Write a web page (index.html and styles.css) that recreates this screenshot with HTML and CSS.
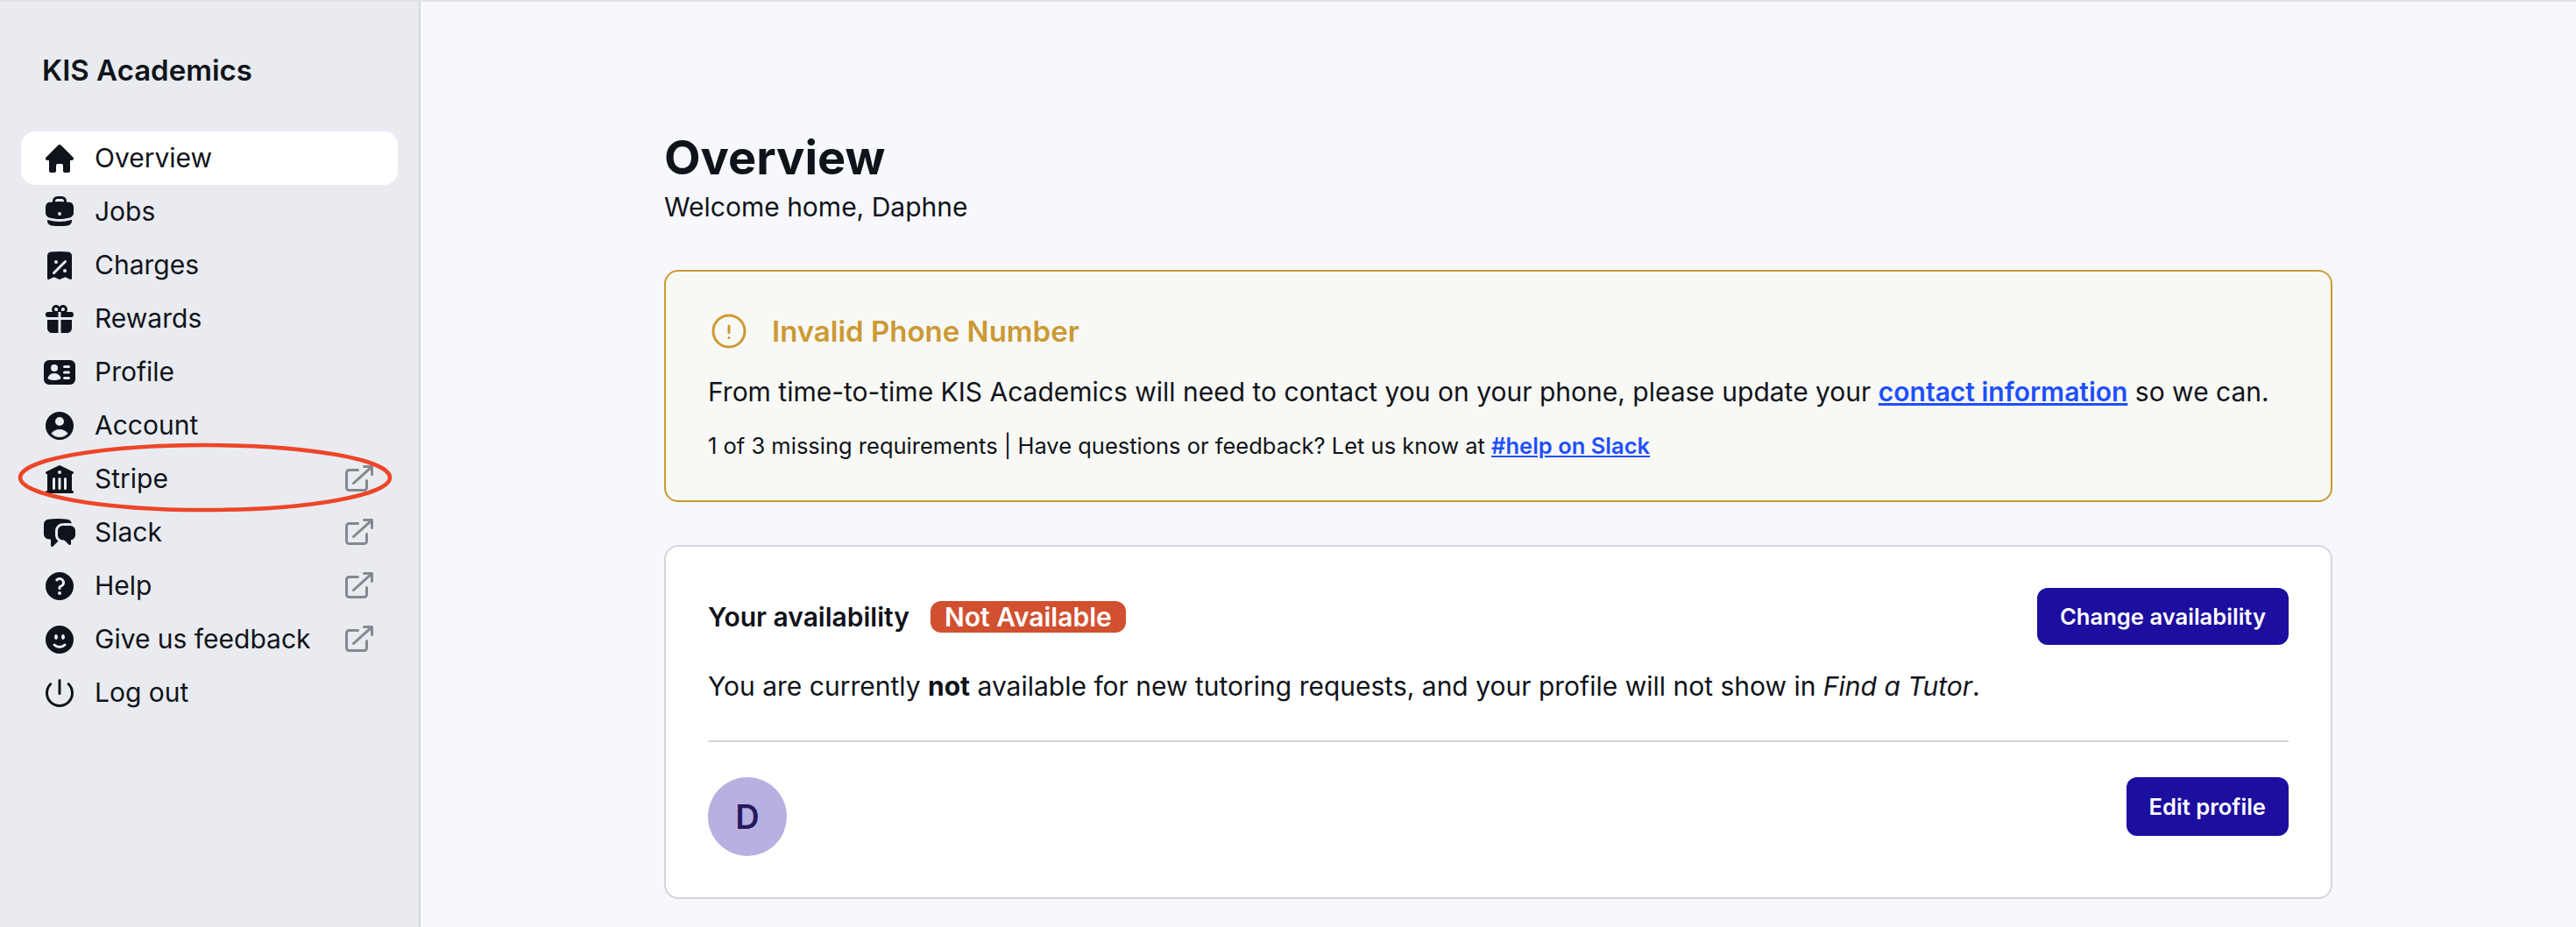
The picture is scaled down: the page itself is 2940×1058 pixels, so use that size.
FILE: index.html
```html
<!DOCTYPE html>
<html lang="en">
<head>
    <meta charset="UTF-8">
    <title>Overview - KIS Academics</title>
    <link rel="stylesheet" href="styles.css">
</head>
<body>
    <div class="layout">
        <aside class="sidebar">
            <div class="brand">KIS Academics</div>
            <nav class="nav">
                <a class="nav-item active">
                    <svg class="icon" viewBox="0 0 20 20"><path fill-rule="evenodd" clip-rule="evenodd" d="M9.293 2.293a1 1 0 0 1 1.414 0l7 7A1 1 0 0 1 17 11h-1v6a1 1 0 0 1-1 1h-2a1 1 0 0 1-1-1v-3a1 1 0 0 0-1-1H9a1 1 0 0 0-1 1v3a1 1 0 0 1-1 1H5a1 1 0 0 1-1-1v-6H3a1 1 0 0 1-.707-1.707l7-7Z"/></svg>
                    <span class="nav-label">Overview</span>
                </a>
                <a class="nav-item">
                    <svg class="icon" viewBox="0 0 20 20"><path fill-rule="evenodd" clip-rule="evenodd" d="M6 3.75A2.75 2.75 0 0 1 8.75 1h2.5A2.75 2.75 0 0 1 14 3.75v.443c.572.055 1.14.122 1.706.2C17.053 4.582 18 5.75 18 7.07v3.469c0 1.126-.694 2.191-1.83 2.54-1.952.599-4.024.921-6.17.921s-4.219-.322-6.17-.921C2.694 12.73 2 11.665 2 10.539V7.07c0-1.321.947-2.489 2.294-2.676A41.047 41.047 0 0 1 6 4.193V3.75Zm6.5 0v.325a41.622 41.622 0 0 0-5 0V3.75c0-.69.56-1.25 1.25-1.25h2.5c.69 0 1.25.56 1.25 1.25ZM10 10a1 1 0 0 0-1 1v.01a1 1 0 0 0 1 1h.01a1 1 0 0 0 1-1V11a1 1 0 0 0-1-1H10Z"/><path d="M3 15.055v-.684c.126.053.255.1.39.142 2.092.642 4.313.987 6.61.987 2.297 0 4.518-.345 6.61-.987.135-.041.264-.089.39-.142v.684c0 1.347-.985 2.53-2.363 2.686a41.454 41.454 0 0 1-9.274 0C3.985 17.585 3 16.402 3 15.055Z"/></svg>
                    <span class="nav-label">Jobs</span>
                </a>
                <a class="nav-item">
                    <svg class="icon" viewBox="0 0 20 20"><path fill-rule="evenodd" clip-rule="evenodd" d="M4.93 2.31a41.401 41.401 0 0 1 10.14 0C16.194 2.45 17 3.414 17 4.517V17.25a.75.75 0 0 1-1.075.676l-2.8-1.344-2.8 1.344a.75.75 0 0 1-.65 0l-2.8-1.344-2.8 1.344A.75.75 0 0 1 3 17.25V4.517c0-1.103.806-2.068 1.93-2.207Zm8.85 5.97a.75.75 0 0 0-1.06-1.06l-6.5 6.5a.75.75 0 1 0 1.06 1.06l6.5-6.5ZM9 8a1 1 0 1 1-2 0 1 1 0 0 1 2 0Zm3 5a1 1 0 1 1 2 0 1 1 0 0 1-2 0Z"/></svg>
                    <span class="nav-label">Charges</span>
                </a>
                <a class="nav-item">
                    <svg class="icon" viewBox="0 0 20 20"><path fill-rule="evenodd" clip-rule="evenodd" d="M14 6a2.5 2.5 0 0 0-4-3 2.5 2.5 0 0 0-4 3H3.25C2.56 6 2 6.56 2 7.25v.5C2 8.44 2.56 9 3.25 9h6V6h1.5v3h6C17.44 9 18 8.44 18 7.75v-.5C18 6.56 17.44 6 16.75 6H14Zm-1-1.5a1 1 0 0 1-1 1h-1v-1a1 1 0 1 1 2 0Zm-6 0a1 1 0 0 0 1 1h1v-1a1 1 0 0 0-2 0Z"/><path d="M9.25 10.5H3v4.75A2.75 2.75 0 0 0 5.75 18h3.5v-7.5ZM10.75 18v-7.5H17v4.75A2.75 2.75 0 0 1 14.25 18h-3.5Z"/></svg>
                    <span class="nav-label">Rewards</span>
                </a>
                <a class="nav-item">
                    <svg class="icon" viewBox="0 0 20 20"><path fill-rule="evenodd" clip-rule="evenodd" d="M1 6a3 3 0 0 1 3-3h12a3 3 0 0 1 3 3v8a3 3 0 0 1-3 3H4a3 3 0 0 1-3-3V6Zm4 1.5a2 2 0 1 1 4 0 2 2 0 0 1-4 0Zm2 3a4 4 0 0 0-3.665 2.395.75.75 0 0 0 .416 1A8.98 8.98 0 0 0 7 14.5a8.98 8.98 0 0 0 3.249-.604.75.75 0 0 0 .416-1.001A4.001 4.001 0 0 0 7 10.5Zm5-3.75a.75.75 0 0 1 .75-.75h2.5a.75.75 0 0 1 0 1.5h-2.5a.75.75 0 0 1-.75-.75Zm0 6.5a.75.75 0 0 1 .75-.75h2.5a.75.75 0 0 1 0 1.5h-2.5a.75.75 0 0 1-.75-.75Zm.75-4a.75.75 0 0 0 0 1.5h2.5a.75.75 0 0 0 0-1.5h-2.5Z"/></svg>
                    <span class="nav-label">Profile</span>
                </a>
                <a class="nav-item">
                    <svg class="icon" viewBox="0 0 20 20"><path fill-rule="evenodd" clip-rule="evenodd" d="M18 10a8 8 0 1 1-16 0 8 8 0 0 1 16 0Zm-5.5-2.5a2.5 2.5 0 1 1-5 0 2.5 2.5 0 0 1 5 0ZM10 12a5.99 5.99 0 0 0-4.793 2.39A6.483 6.483 0 0 0 10 16.5a6.483 6.483 0 0 0 4.793-2.11A5.99 5.99 0 0 0 10 12Z"/></svg>
                    <span class="nav-label">Account</span>
                </a>
                <a class="nav-item">
                    <svg class="icon" viewBox="0 0 20 20"><path fill-rule="evenodd" clip-rule="evenodd" d="M9.674 2.075a.75.75 0 0 1 .652 0l7.25 3.5A.75.75 0 0 1 17 6.957V16.5h.25a.75.75 0 0 1 0 1.5H2.75a.75.75 0 0 1 0-1.5H3V6.957a.75.75 0 0 1-.576-1.382l7.25-3.5ZM11 6a1 1 0 1 1-2 0 1 1 0 0 1 2 0ZM7.5 9.75a.75.75 0 0 0-1.5 0v5.5a.75.75 0 0 0 1.5 0v-5.5Zm3.25 0a.75.75 0 0 0-1.5 0v5.5a.75.75 0 0 0 1.5 0v-5.5Zm3.25 0a.75.75 0 0 0-1.5 0v5.5a.75.75 0 0 0 1.5 0v-5.5Z"/></svg>
                    <span class="nav-label">Stripe</span>
                    <svg class="icon external" viewBox="0 0 20 20"><path fill-rule="evenodd" clip-rule="evenodd" d="M4.25 5.5a.75.75 0 0 0-.75.75v8.5c0 .414.336.75.75.75h8.5a.75.75 0 0 0 .75-.75v-4a.75.75 0 0 1 1.5 0v4A2.25 2.25 0 0 1 12.75 17h-8.5A2.25 2.25 0 0 1 2 14.75v-8.5A2.25 2.25 0 0 1 4.25 4h5a.75.75 0 0 1 0 1.5h-5Z"/><path fill-rule="evenodd" clip-rule="evenodd" d="M6.194 12.753a.75.75 0 0 0 1.06.053L16.5 4.44v2.81a.75.75 0 0 0 1.5 0v-4.5a.75.75 0 0 0-.75-.75h-4.5a.75.75 0 0 0 0 1.5h2.553l-9.056 8.194a.75.75 0 0 0-.053 1.06Z"/></svg>
                </a>
                <a class="nav-item">
                    <svg class="icon" viewBox="0 0 20 20"><path d="M3.505 2.365A41.369 41.369 0 0 1 9 2c1.863 0 3.697.124 5.495.365 1.247.167 2.18 1.108 2.435 2.268a4.45 4.45 0 0 0-.577-.069 43.141 43.141 0 0 0-4.706 0C9.229 4.696 7.5 6.727 7.5 8.998v2.24c0 1.413.67 2.735 1.76 3.562l-2.98 2.98A.75.75 0 0 1 5 17.25v-3.443c-.501-.048-1-.106-1.495-.172C2.033 13.438 1 12.162 1 10.72V5.28c0-1.441 1.033-2.717 2.505-2.914Z"/><path d="M14 6c-.762 0-1.52.02-2.271.062C10.157 6.148 9 7.472 9 8.998v2.24c0 1.519 1.147 2.839 2.71 2.935.214.013.428.024.642.034.2.009.385.09.518.224l2.35 2.35a.75.75 0 0 0 1.28-.531v-2.07c1.453-.195 2.5-1.463 2.5-2.915V8.998c0-1.526-1.157-2.85-2.729-2.936A41.645 41.645 0 0 0 14 6Z"/></svg>
                    <span class="nav-label">Slack</span>
                    <svg class="icon external" viewBox="0 0 20 20"><path fill-rule="evenodd" clip-rule="evenodd" d="M4.25 5.5a.75.75 0 0 0-.75.75v8.5c0 .414.336.75.75.75h8.5a.75.75 0 0 0 .75-.75v-4a.75.75 0 0 1 1.5 0v4A2.25 2.25 0 0 1 12.75 17h-8.5A2.25 2.25 0 0 1 2 14.75v-8.5A2.25 2.25 0 0 1 4.25 4h5a.75.75 0 0 1 0 1.5h-5Z"/><path fill-rule="evenodd" clip-rule="evenodd" d="M6.194 12.753a.75.75 0 0 0 1.06.053L16.5 4.44v2.81a.75.75 0 0 0 1.5 0v-4.5a.75.75 0 0 0-.75-.75h-4.5a.75.75 0 0 0 0 1.5h2.553l-9.056 8.194a.75.75 0 0 0-.053 1.06Z"/></svg>
                </a>
                <a class="nav-item">
                    <svg class="icon" viewBox="0 0 20 20"><path fill-rule="evenodd" clip-rule="evenodd" d="M18 10a8 8 0 1 1-16 0 8 8 0 0 1 16 0ZM8.94 6.94a.75.75 0 1 1-1.061-1.061 3 3 0 1 1 2.871 5.026v.345a.75.75 0 0 1-1.5 0v-.5c0-.72.57-1.172 1.081-1.287A1.5 1.5 0 1 0 8.94 6.94ZM10 15a1 1 0 1 0 0-2 1 1 0 0 0 0 2Z"/></svg>
                    <span class="nav-label">Help</span>
                    <svg class="icon external" viewBox="0 0 20 20"><path fill-rule="evenodd" clip-rule="evenodd" d="M4.25 5.5a.75.75 0 0 0-.75.75v8.5c0 .414.336.75.75.75h8.5a.75.75 0 0 0 .75-.75v-4a.75.75 0 0 1 1.5 0v4A2.25 2.25 0 0 1 12.75 17h-8.5A2.25 2.25 0 0 1 2 14.75v-8.5A2.25 2.25 0 0 1 4.25 4h5a.75.75 0 0 1 0 1.5h-5Z"/><path fill-rule="evenodd" clip-rule="evenodd" d="M6.194 12.753a.75.75 0 0 0 1.06.053L16.5 4.44v2.81a.75.75 0 0 0 1.5 0v-4.5a.75.75 0 0 0-.75-.75h-4.5a.75.75 0 0 0 0 1.5h2.553l-9.056 8.194a.75.75 0 0 0-.053 1.06Z"/></svg>
                </a>
                <a class="nav-item">
                    <svg class="icon" viewBox="0 0 20 20"><path fill-rule="evenodd" clip-rule="evenodd" d="M10 18a8 8 0 1 0 0-16 8 8 0 0 0 0 16Zm3.536-4.464a.75.75 0 1 0-1.061-1.061 3.5 3.5 0 0 1-4.95 0 .75.75 0 0 0-1.06 1.06 5 5 0 0 0 7.07 0ZM9 8.5c0 .828-.448 1.5-1 1.5s-1-.672-1-1.5S7.448 7 8 7s1 .672 1 1.5Zm3 1.5c.552 0 1-.672 1-1.5S12.552 7 12 7s-1 .672-1 1.5.448 1.5 1 1.5Z"/></svg>
                    <span class="nav-label">Give us feedback</span>
                    <svg class="icon external" viewBox="0 0 20 20"><path fill-rule="evenodd" clip-rule="evenodd" d="M4.25 5.5a.75.75 0 0 0-.75.75v8.5c0 .414.336.75.75.75h8.5a.75.75 0 0 0 .75-.75v-4a.75.75 0 0 1 1.5 0v4A2.25 2.25 0 0 1 12.75 17h-8.5A2.25 2.25 0 0 1 2 14.75v-8.5A2.25 2.25 0 0 1 4.25 4h5a.75.75 0 0 1 0 1.5h-5Z"/><path fill-rule="evenodd" clip-rule="evenodd" d="M6.194 12.753a.75.75 0 0 0 1.06.053L16.5 4.44v2.81a.75.75 0 0 0 1.5 0v-4.5a.75.75 0 0 0-.75-.75h-4.5a.75.75 0 0 0 0 1.5h2.553l-9.056 8.194a.75.75 0 0 0-.053 1.06Z"/></svg>
                </a>
                <a class="nav-item">
                    <svg class="icon" viewBox="0 0 20 20"><path fill-rule="evenodd" clip-rule="evenodd" d="M10 2a.75.75 0 0 1 .75.75v7.5a.75.75 0 0 1-1.5 0v-7.5A.75.75 0 0 1 10 2ZM5.404 4.343a.75.75 0 0 1 0 1.06 6.5 6.5 0 1 0 9.192 0 .75.75 0 1 1 1.06-1.06 8 8 0 1 1-11.313 0 .75.75 0 0 1 1.06 0Z"/></svg>
                    <span class="nav-label">Log out</span>
                </a>
            </nav>
        </aside>

        <main class="main">
            <div class="content">
                <h1 class="page-title">Overview</h1>
                <p class="page-subtitle">Welcome home, Daphne</p>

                <section class="alert">
                    <div class="alert-head">
                        <svg class="alert-icon" viewBox="0 0 24 24"><path d="M12 9v3.75m9-.75a9 9 0 1 1-18 0 9 9 0 0 1 18 0Zm-9 3.75h.008v.008H12v-.008Z"/></svg>
                        <span class="alert-title">Invalid Phone Number</span>
                    </div>
                    <p class="alert-body">From time-to-time KIS Academics will need to contact you on your phone, please update your <a class="link">contact information</a> so we can.</p>
                    <p class="alert-note">1 of 3 missing requirements | Have questions or feedback? Let us know at <a class="link">#help on Slack</a></p>
                </section>

                <section class="card">
                    <div class="card-head">
                        <div class="card-title-row">
                            <span class="card-title">Your availability</span>
                            <span class="badge">Not Available</span>
                        </div>
                        <button class="btn btn-change">Change availability</button>
                    </div>
                    <p class="card-text">You are currently <strong>not</strong> available for new tutoring requests, and your profile will not show in <em>Find a Tutor</em>.</p>
                    <hr class="divider">
                    <div class="profile-row">
                        <div class="avatar">D</div>
                        <button class="btn btn-edit">Edit profile</button>
                    </div>
                </section>
            </div>
        </main>
    </div>

    <!-- red hand annotation around the Stripe row -->
    <svg class="annotation" viewBox="0 0 432 84"><ellipse cx="216" cy="41" rx="211" ry="37"/></svg>
</body>
</html>
```

FILE: styles.css
```css
* {
    box-sizing: border-box;
}

html, body {
    height: 100%;
}

body {
    margin: 0;
    font-family: Inter, "Liberation Sans", sans-serif;
    font-size: 30px;
    color: #10131a;
    background-color: #f7f8fc;
    overflow: hidden;
}

.layout {
    display: flex;
    height: 100%;
    border-top: 2px solid #e1e3e5;
}

.sidebar {
    width: 480px;
    flex-shrink: 0;
    padding: 0 24px;
    background-color: #e9ebf0;
    border-right: 2px solid #d3d7dc;
}

.brand {
    margin: 58px 0 0 24px;
    font-size: 33px;
    font-weight: 600;
    line-height: 40px;
}

.nav {
    display: flex;
    flex-direction: column;
    margin-top: 50px;
}

.nav-item {
    display: flex;
    align-items: center;
    gap: 20px;
    height: 61px;
    padding: 0 24px;
    border-radius: 16px;
    line-height: 40px;
}

.nav-item.active {
    background-color: #fff;
}

.nav-label {
    flex: 1;
    padding-bottom: 2px;
}

.icon {
    width: 40px;
    height: 40px;
    flex-shrink: 0;
    fill: #10131a;
}

.icon.external {
    fill: #85888f;
}

.main {
    flex: 1;
    padding-top: 146px;
}

.content {
    width: 1904px;
    margin: 0 auto;
}

.page-title {
    margin: 0;
    font-size: 54px;
    font-weight: 700;
    line-height: 64px;
}

.page-subtitle {
    margin: 0;
    line-height: 48px;
}

.alert {
    margin-top: 48px;
    padding: 44px 48px 42px;
    background-color: #f8f9f5;
    border: 2px solid #cc9935;
    border-radius: 16px;
}

.alert-head {
    display: flex;
    align-items: center;
    gap: 25px;
}

.alert-icon {
    width: 48px;
    height: 48px;
    fill: none;
    stroke: #cc9935;
    stroke-width: 1.5;
    stroke-linecap: round;
    stroke-linejoin: round;
}

.alert-title {
    font-size: 33px;
    font-weight: 600;
    color: #cc9935;
    line-height: 48px;
}

.alert-body {
    margin: 21px 0 0;
    line-height: 48px;
}

.alert-note {
    margin: 18px 0 0;
    font-size: 25.5px;
    line-height: 40px;
}

.link {
    font-weight: 600;
    color: #1f4fff;
    text-decoration: underline;
}

.card {
    margin-top: 49px;
    padding: 47px 48px;
    background-color: #fff;
    border: 2px solid #d3d6dc;
    border-radius: 16px;
}

.card-head {
    display: flex;
    align-items: center;
    justify-content: space-between;
}

.card-title-row {
    display: flex;
    align-items: center;
    gap: 24px;
}

.card-title {
    font-weight: 600;
}

.badge {
    height: 36px;
    padding: 0 16px;
    background-color: #d15030;
    border-radius: 12px;
    color: #fff;
    font-weight: 600;
    line-height: 36px;
}

.btn {
    border: none;
    border-radius: 12px;
    padding: 0 26px;
    background-color: #1c0e9f;
    color: #fff;
    font-family: inherit;
    font-size: 25.6px;
    font-weight: 600;
}

.btn-change {
    height: 65px;
}

.btn-edit {
    height: 67px;
}

.card-text {
    margin: 23px 0 0;
    line-height: 48px;
}

.divider {
    margin: 38px 0 40px;
    height: 2px;
    border: none;
    background-color: #d3d6dc;
}

.profile-row {
    display: flex;
    align-items: flex-start;
    justify-content: space-between;
}

.avatar {
    display: flex;
    align-items: center;
    justify-content: center;
    width: 90px;
    height: 90px;
    border-radius: 50%;
    background-color: #b8b0e0;
    color: #251a60;
    font-size: 38px;
    font-weight: 600;
}

.annotation {
    position: absolute;
    left: 18px;
    top: 504px;
    width: 432px;
    height: 84px;
    fill: none;
    stroke: #ee4528;
    stroke-width: 4.5;
}
```
